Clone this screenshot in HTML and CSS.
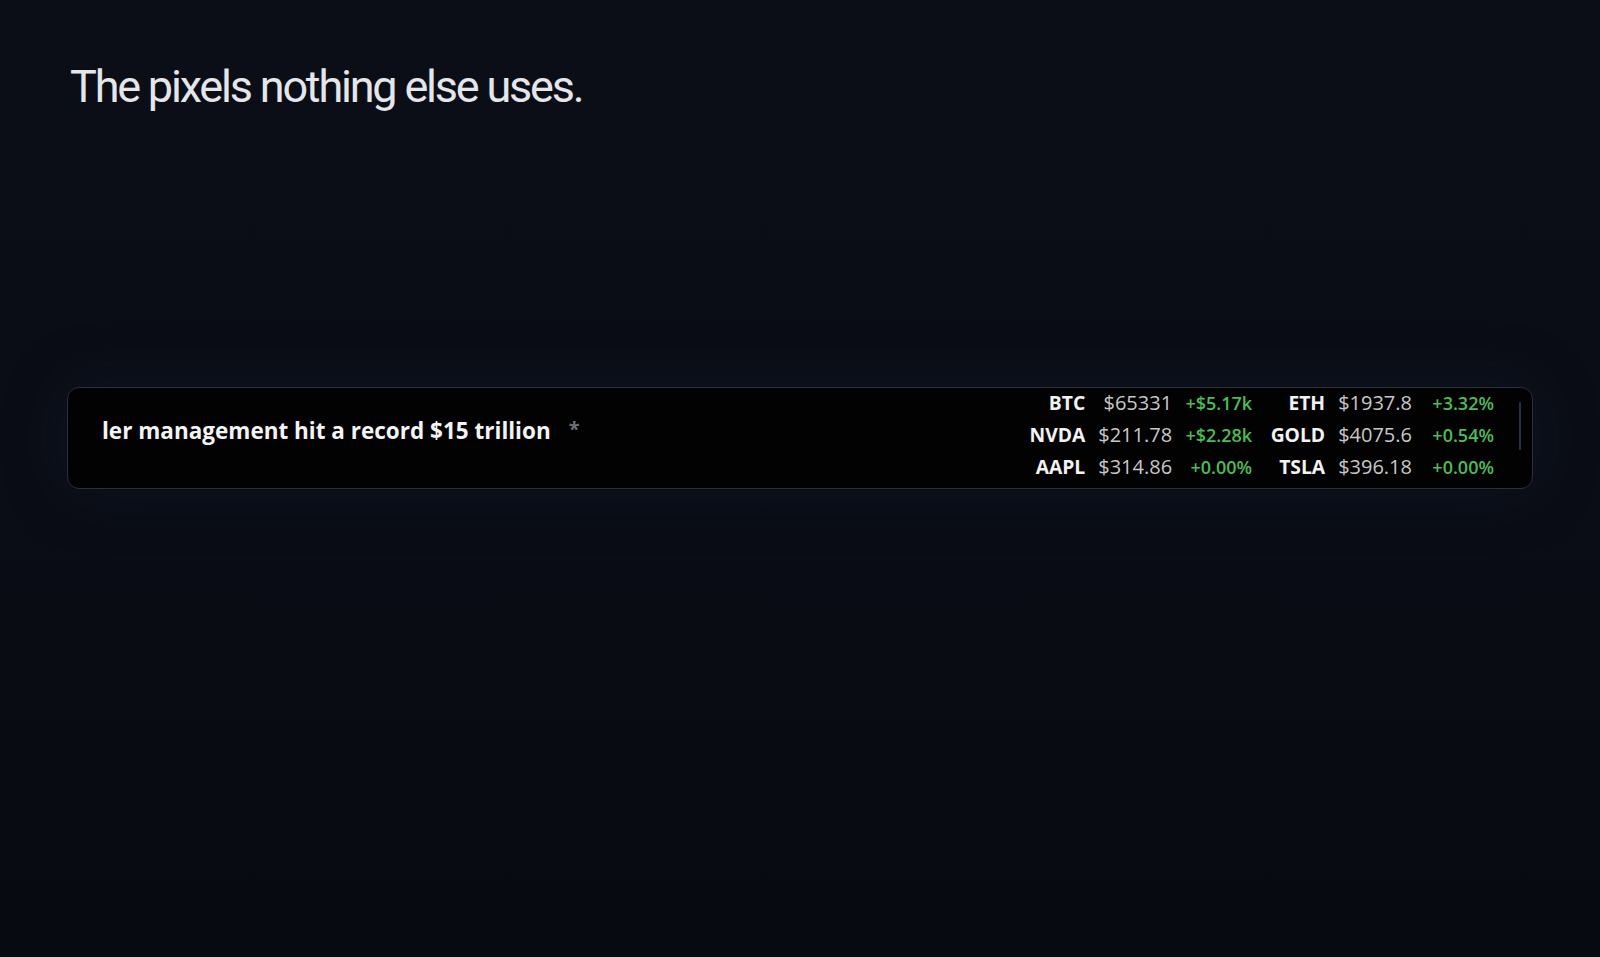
FILE: index.html
```html
<!DOCTYPE html>
<html>
<head>
	<title>Ticker</title>
	<link rel="stylesheet" href="styles.css">
</head>
<body>
	<div class="page">
		<h1 class="title">The pixels nothing else uses.</h1>

		<div class="bar">
			<div class="headline">
				<span class="headlineText">ler management hit a record $15 trillion</span>
				<span class="sep">*</span>
			</div>
			<div class="quotes">
				<span class="sym">BTC</span><span class="price">$65331</span><span class="chg">+$5.17k</span>
				<span class="sym">ETH</span><span class="price">$1937.8</span><span class="chg">+3.32%</span>

				<span class="sym">NVDA</span><span class="price">$211.78</span><span class="chg">+$2.28k</span>
				<span class="sym">GOLD</span><span class="price">$4075.6</span><span class="chg">+0.54%</span>

				<span class="sym">AAPL</span><span class="price">$314.86</span><span class="chg">+0.00%</span>
				<span class="sym">TSLA</span><span class="price">$396.18</span><span class="chg">+0.00%</span>
			</div>
			<div class="thumb"></div>
		</div>
	</div>
</body>
</html>
```

FILE: styles.css
```css
*{
	padding:0;
	margin:0;
	box-sizing: border-box;
}
html,body{
	height:100%;
}
body{
	background: linear-gradient(180deg, #0b0e17 0%, #0a0d15 50%, #070a10 100%);
	overflow: hidden;
}
.page{
	padding:0 67px;
}

.title{
	margin:60px 0 0 3px;
	font-family: Roboto, "Liberation Sans", sans-serif;
	font-weight: 400;
	font-size:45px;
	line-height:54px;
	letter-spacing:-2.2px;
	color:#e4e6ea;
}

.bar{
	display: flex;
	margin-top:273px;
	height:102px;
	background-color:#020203;
	border:1px solid #2a2f3d;
	border-radius:12px;
	box-shadow: 0 0 60px rgba(24,32,58,0.35);
	font-family: "Open Sans", "Liberation Sans", sans-serif;
}

.headline{
	flex:1;
	padding:26px 0 0 34px;
	line-height:30px;
	white-space: nowrap;
	overflow: hidden;
}
.headlineText{
	font-size:22.5px;
	font-weight:700;
	color:#f4f4f4;
}
.sep{
	margin-left:14px;
	font-size:20px;
	font-weight:700;
	color:#6d6f74;
	vertical-align: 3px;
}

/* sym | price | change, twice per row */
.quotes{
	display: grid;
	grid-template-columns: auto auto 80px 73px auto 82px;
	justify-items: end;
	align-items: baseline;
	align-self: flex-start;
	margin-top:-1px;
	line-height:31px;
}
.sym{
	font-size:19.3px;
	font-weight:700;
	color:#f2f2f2;
}
.price{
	padding-left:13px;
	font-size:20px;
	font-weight:400;
	color:#c8c8c8;
}
.chg{
	font-size:18px;
	font-weight:600;
	color:#4dbb57;
}

.thumb{
	width:2px;
	height:48px;
	margin:14px 11px 0 25px;
	border-radius:1px;
	background-color:#28314c;
}
```
